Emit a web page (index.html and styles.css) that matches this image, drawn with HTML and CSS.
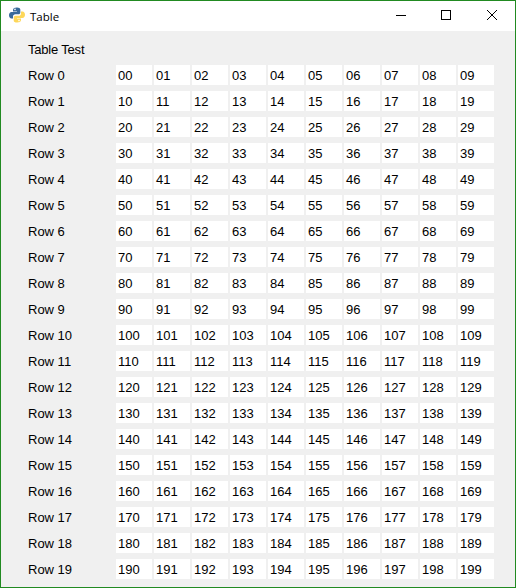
FILE: index.html
```html
<!DOCTYPE html>
<html lang="en">
<head>
    <meta charset="UTF-8">
    <title>Table</title>
    <link rel="stylesheet" href="styles.css">
</head>
<body>
    <div class="window">
        <div class="titlebar">
            <svg class="app-icon" width="16" height="16" viewBox="0 0 16 16">
                <path fill="#38699a" d="M8 0.500C5.500 0.500 4 1.300 4 3v1.500h4V5H2.500C1 5 0 6.300 0 8.200s1 3.300 2.500 3.300H4V9.600C4 8.200 5 7.300 6.300 7.300h3.200c1 0 1.800-.8 1.800-1.800V2.600C11.300 1.300 10 0.500 8 0.500z"/>
                <path fill="#fdd75a" d="M8 15.500c2.500 0 4-.8 4-2.500v-1.500H8V11h5.500c1.500 0 2.500-1.300 2.500-3.200S15 4.500 13.500 4.500H12v1.900c0 1.400-1 2.300-2.300 2.300H6.500c-1 0-1.800.8-1.800 1.800v2.900c0 1.300 1.300 2.100 3.300 2.100z"/>
                <circle cx="6" cy="2.400" r=".8" fill="#fff"/>
                <circle cx="10" cy="13.600" r=".8" fill="#fff"/>
            </svg>
            <span class="title">Table</span>
            <div class="controls">
                <svg width="46" height="30" viewBox="0 0 46 30"><path d="M19 14.500h10" stroke="#000" fill="none"/></svg>
                <svg width="46" height="30" viewBox="0 0 46 30"><rect x="18.500" y="9.500" width="9" height="9" stroke="#000" fill="none"/></svg>
                <svg width="46" height="30" viewBox="0 0 46 30"><path d="M18 9l10 10M28 9L18 19" stroke="#000" fill="none"/></svg>
            </div>
        </div>
        <div class="content">
            <div class="heading">Table Test</div>
            <div class="table" id="table"></div>
        </div>
    </div>
    <script>
        // Build the 20 x 10 grid
        const table = document.getElementById('table');
        for (let r = 0; r < 20; r++) {
            const row = document.createElement('div');
            row.className = 'row';
            const label = document.createElement('div');
            label.className = 'row-label';
            label.textContent = `Row ${r}`;
            row.appendChild(label);
            for (let c = 0; c < 10; c++) {
                const cell = document.createElement('div');
                cell.className = 'cell';
                cell.textContent = r === 0 ? `0${c}` : `${r * 10 + c}`;
                row.appendChild(cell);
            }
            table.appendChild(row);
        }
    </script>
</body>
</html>
```
FILE: styles.css
```css
html, body {
    margin: 0;
    padding: 0;
}
body {
    font-family: "Liberation Sans", Arial, sans-serif;
    font-size: 13px;
    color: #000;
}
.window {
    width: 516px;
    height: 588px;
    box-sizing: border-box;
    border: 1px solid #218a21;
    background: #f0f0f0;
    overflow: hidden;
}
.titlebar {
    display: flex;
    align-items: center;
    height: 30px;
    background: #fff;
}
.app-icon {
    margin-left: 8px;
    margin-bottom: 2px;
}
.title {
    margin-left: 5px;
    font-family: "Open Sans", sans-serif;
    font-size: 11.5px;
}
.controls {
    display: flex;
    margin-left: auto;
}
.content {
    padding: 7px 0 0 27px;
}
.heading {
    height: 27px;
    line-height: 24px;
    letter-spacing: -0.2px;
}
.row {
    display: flex;
    gap: 2px;
    height: 20px;
    margin-bottom: 6px;
    line-height: 21px;
}
.row-label {
    width: 86px;
}
.cell {
    width: 36px;
    padding-left: 2px;
    box-sizing: border-box;
    background: #fff;
}
```
